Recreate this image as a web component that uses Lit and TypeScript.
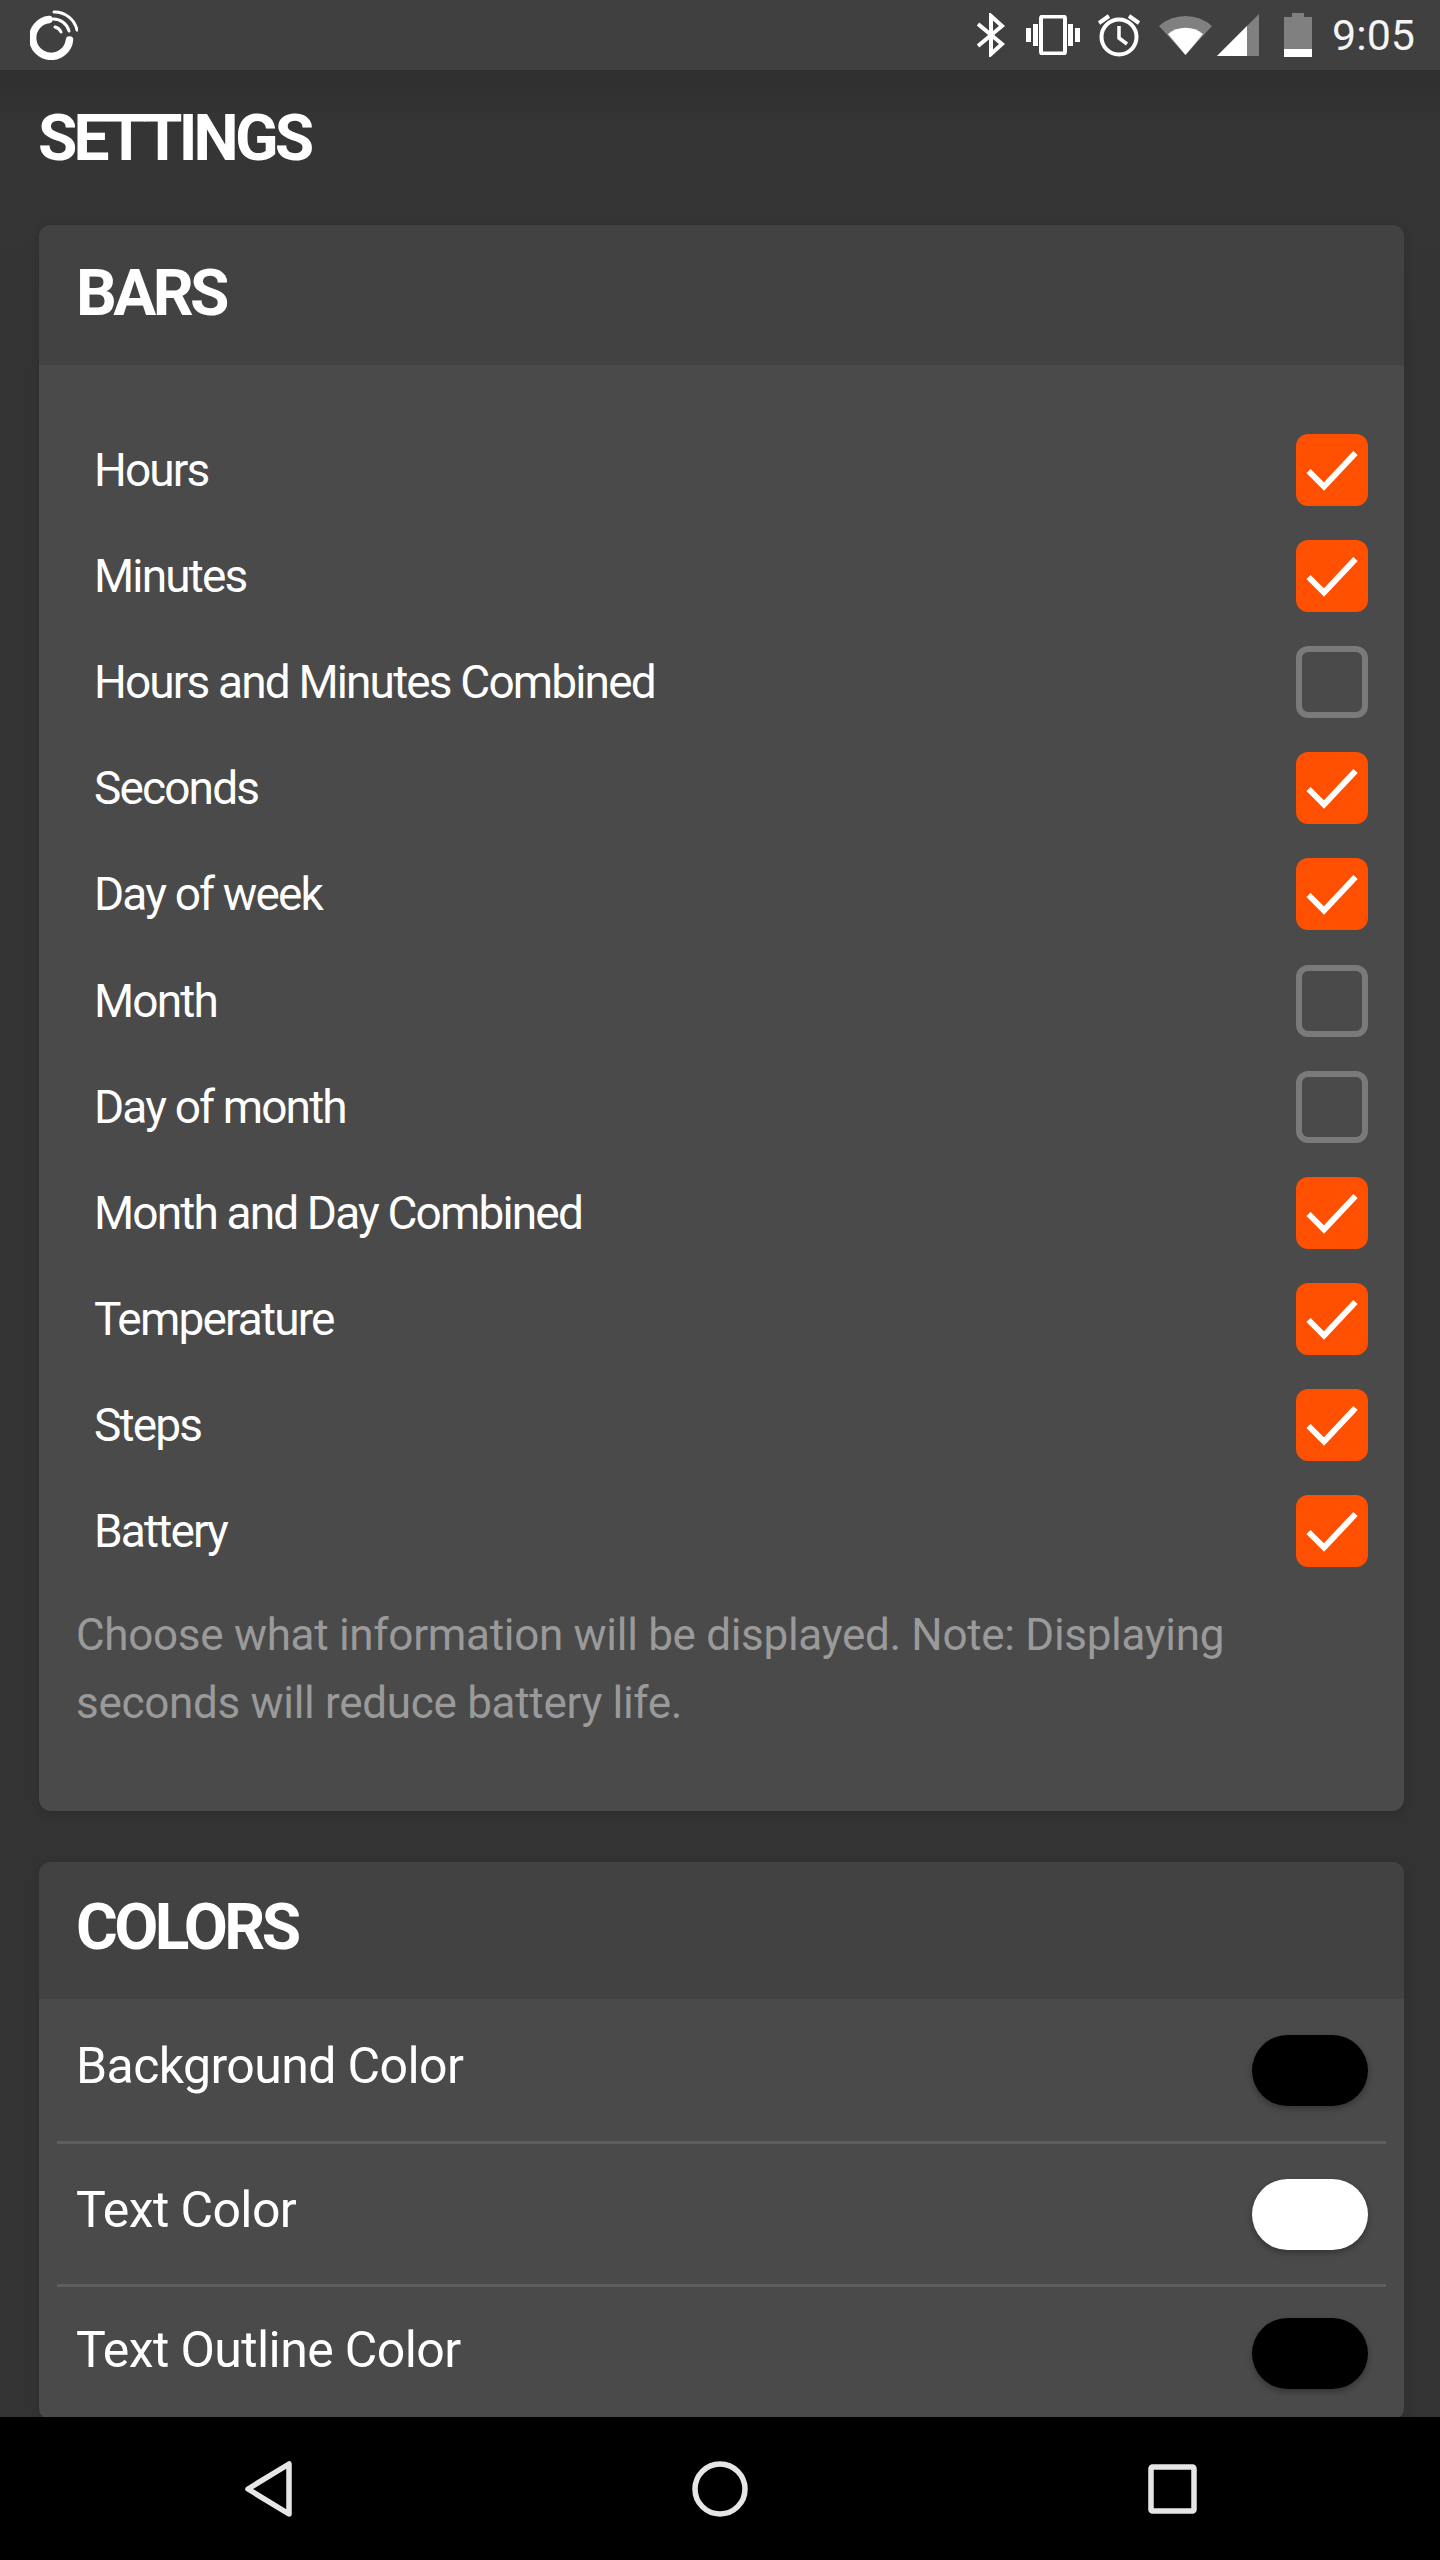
import { LitElement, html, css } from "lit";
import { customElement } from "lit/decorators.js";

const bars: [string, boolean][] = [
  ["Hours", true],
  ["Minutes", true],
  ["Hours and Minutes Combined", false],
  ["Seconds", true],
  ["Day of week", true],
  ["Month", false],
  ["Day of month", false],
  ["Month and Day Combined", true],
  ["Temperature", true],
  ["Steps", true],
  ["Battery", true],
];

const colors: [string, string][] = [
  ["Background Color", "#000"],
  ["Text Color", "#fff"],
  ["Text Outline Color", "#000"],
];

@customElement("app-root")
export class AppRoot extends LitElement {
  static styles = css`
    :host {
      display: block;
      width: 1440px;
      height: 2560px;
      font-family: Roboto, "Liberation Sans", sans-serif;
      color: #fff;
      overflow: hidden;
    }
    .page { height: 2560px; display: flex; flex-direction: column; background: #333; }
    .status {
      height: 70px; flex: none; background: #404040;
      display: flex; align-items: center; padding: 0 25px 0 30px;
    }
    .status svg { display: block; flex: none; }
    .spacer { flex: 1; }
    .time { font-size: 43px; font-weight: 400; margin-left: 20px; line-height: 70px; color: #f4f4f4; }
    .content {
      flex: 1; min-height: 0; overflow: hidden;
      padding: 0 36px 0 39px;
      background: linear-gradient(#2f2f2f, #353535 60px, #333 300px);
    }
    h1 {
      margin: 0 0 0 -1px; height: 155px; display: flex; align-items: center;
      padding-bottom: 18px; box-sizing: border-box;
      font-size: 64px; font-weight: 700; letter-spacing: -3.8px; line-height: 1;
    }
    .card {
      border-radius: 12px; overflow: hidden; background: #4a4a4a;
      box-shadow: 0 2px 8px rgba(0,0,0,.12);
    }
    .card + .card { margin-top: 51px; }
    .head {
      height: 140px; background: #424242; display: flex; align-items: center;
      padding: 0 0 4px 37px; box-sizing: border-box;
      font-size: 64px; font-weight: 700; letter-spacing: -3.6px;
    }
    .head.short { height: 137px; padding-bottom: 7px; }
    .bars { padding: 52px 36px 0 55px; }
    .row {
      height: 106.1px; display: flex; align-items: center; justify-content: space-between;
      font-size: 46px; letter-spacing: -1.85px; font-weight: 400;
    }
    .box {
      width: 72px; height: 72px; border-radius: 12px; box-sizing: border-box;
      display: flex; align-items: center; justify-content: center; flex: none;
    }
    .box.on { background: #ff4f00; }
    .box.off { border: 6px solid #7a7a7a; }
    .note {
      margin: 0; padding: 17px 100px 74px 37px;
      font-size: 44px; line-height: 68px; color: #9a9a9a; letter-spacing: -.3px;
    }
    .item {
      height: 145px; margin: 0 18px; padding: 0 18px 0 19px;
      display: flex; align-items: center; justify-content: space-between;
      font-size: 50px; letter-spacing: -.6px;
      border-bottom: 3px solid #5e5e5e; box-sizing: border-box;
    }
    .item span { margin-bottom: 8px; }
    .item.mid { height: 143px; }
    .item:last-child { border-bottom: none; height: 133px; }
    .pill {
      width: 116px; height: 71px; border-radius: 36px; flex: none;
      box-shadow: 0 3px 6px rgba(0,0,0,.3);
    }
    .nav {
      height: 143px; flex: none; background: #000;
      display: flex; align-items: center; justify-content: space-between;
      padding: 0 243px 0 245px;
    }
    .nav svg { display: block; flex: none; }
    .ml21 { margin-left: 21px; }
    .ml18 { margin-left: 18px; }
    .ml19 { margin-left: 19px; }
    .ml4 { margin-left: 4px; }
    .ml25 { margin-left: 25px; }
  `;

  private check() {
    return html`<svg width="52" height="42" viewBox="0 0 52 42"><path d="M2.5 22 L18 37.5 L49.5 4" fill="none" stroke="#fff" stroke-width="6"/></svg>`;
  }

  private logo() {
    return html`<svg width="48" height="50" viewBox="0 0 48 50" fill="none" stroke="#fff" stroke-linecap="round">
      <path d="M19 9.5 A18.5 18.5 0 1 0 39.5 30" stroke-width="7.5"/>
      <path d="M24 2 A23 23 0 0 1 47 20" stroke-width="3"/>
      <path d="M23 9 A16 16 0 0 1 39 21" stroke-width="3"/>
      <path d="M25 17 A9 9 0 0 1 31 22" stroke-width="3"/>
    </svg>`;
  }

  private statusIcons() {
    const f = "#fff";
    return html`
      <svg width="28" height="44" viewBox="0 0 28 44" fill="none" stroke="${f}" stroke-width="4">
        <path d="M1 11 L25 31 L14 41 V3 L25 13 L1 33"/>
      </svg>
      <svg class="ml21" width="54" height="40" viewBox="0 0 54 40" fill="${f}">
        <rect x="15" y="1.5" width="24" height="37" rx="2" fill="none" stroke="${f}" stroke-width="4"/>
        <rect x="0" y="13" width="5" height="14"/><rect x="7" y="9" width="5" height="22"/>
        <rect x="42" y="9" width="5" height="22"/><rect x="49" y="13" width="5" height="14"/>
      </svg>
      <svg class="ml18" width="42" height="44" viewBox="0 0 42 44" fill="none" stroke="${f}">
        <circle cx="21" cy="24" r="17.5" stroke-width="4"/>
        <path d="M21 13 V25 L29 31" stroke-width="3.5"/>
        <path d="M1 10 L11 3 M41 10 L31 3" stroke-width="4"/>
      </svg>
      <svg class="ml19" width="54" height="44" viewBox="0 0 54 44">
        <path d="M0 13 A40 40 0 0 1 53 13 L26.5 42 Z" fill="#808080"/>
        <path d="M9 21 A28 28 0 0 1 44 21 L26.5 42 Z" fill="${f}"/>
      </svg>
      <svg class="ml4" width="42" height="44" viewBox="0 0 42 44">
        <path d="M42 1 V43 H0 Z" fill="#808080"/>
        <path d="M30 13 V43 H0 Z" fill="${f}"/>
      </svg>
      <svg class="ml25" width="28" height="44" viewBox="0 0 28 44">
        <path d="M8 0 H20 V4 H28 V44 H0 V4 H8 Z" fill="#808080"/>
        <rect x="0" y="36" width="28" height="8" fill="${f}"/>
      </svg>`;
  }

  private navIcons() {
    const c = "#e6e6e6";
    return html`
      <svg width="47" height="56" viewBox="0 0 47 56" fill="none" stroke="${c}" stroke-width="5.5" stroke-linejoin="round">
        <path d="M44 3 V53 L3 28 Z"/>
      </svg>
      <svg width="56" height="56" viewBox="0 0 56 56" fill="none" stroke="${c}" stroke-width="5.5">
        <circle cx="28" cy="28" r="25"/>
      </svg>
      <svg width="49" height="50" viewBox="0 0 49 50" fill="none" stroke="${c}" stroke-width="5.5">
        <rect x="3" y="3" width="43" height="44" rx="1.5"/>
      </svg>`;
  }

  render() {
    return html`
      <div class="page">
        <div class="status">
          ${this.logo()}
          <div class="spacer"></div>
          ${this.statusIcons()}
          <div class="time">9:05</div>
        </div>
        <div class="content">
          <h1>SETTINGS</h1>
          <section class="card">
            <div class="head">BARS</div>
            <div class="bars">
              ${bars.map(
                ([label, on]) => html`<div class="row">
                  <span>${label}</span>
                  <div class="box ${on ? "on" : "off"}">${on ? this.check() : ""}</div>
                </div>`
              )}
            </div>
            <p class="note">Choose what information will be displayed. Note: Displaying seconds will reduce battery life.</p>
          </section>
          <section class="card">
            <div class="head short">COLORS</div>
            ${colors.map(
              ([label, color], i) => html`<div class="item ${i === 1 ? "mid" : ""}">
                <span>${label}</span>
                <div class="pill" style="background:${color}"></div>
              </div>`
            )}
          </section>
        </div>
        <div class="nav">${this.navIcons()}</div>
      </div>
    `;
  }
}
